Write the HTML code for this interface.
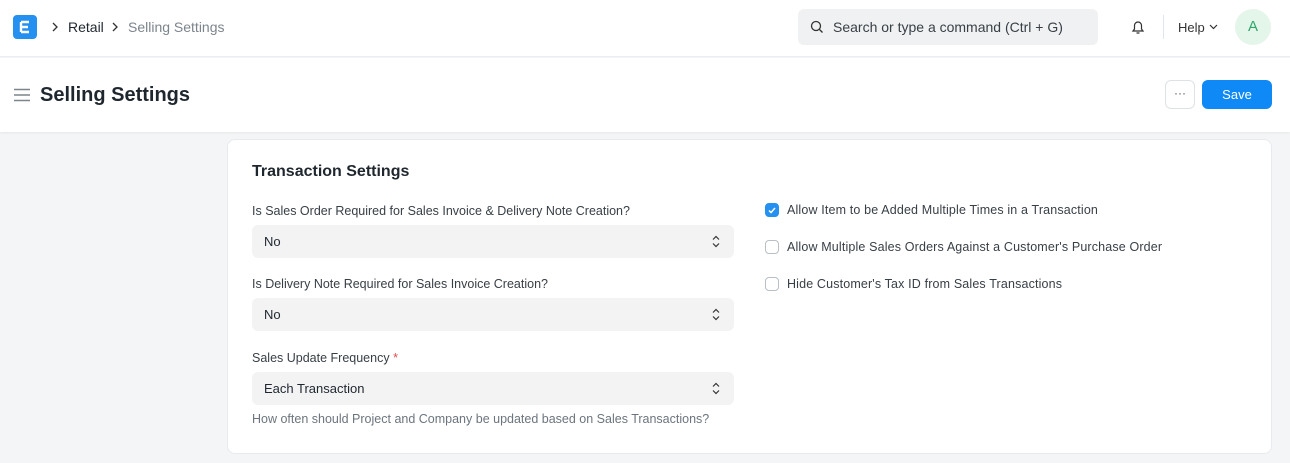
<!DOCTYPE html>
<html><head><style>
*{box-sizing:border-box;margin:0;padding:0}
body{width:1290px;height:463px;overflow:hidden;background:#f4f5f6;font-family:"Liberation Sans",sans-serif;color:#1f272e;position:relative}
.nav{position:absolute;left:0;top:0;width:1290px;height:57px;background:#fff;border-bottom:1px solid #ebeef0}
.head{position:absolute;left:0;top:58px;width:1290px;height:74px;background:#fff;box-shadow:0 1px 2px rgba(0,0,0,.06)}
.abs{position:absolute}
.card{position:absolute;left:227px;top:139px;width:1045px;height:315px;background:#fff;border-radius:8px;border:1px solid #e8ebee}
.lbl{position:absolute;font-size:12.5px;color:#383f45}
.sel{position:absolute;left:25px;width:482px;height:33px;background:#f3f3f4;border-radius:6px;font-size:13px;padding:9px 12px;color:#1f272e}
.sel svg{position:absolute;right:14px;top:10px}
.cb{position:absolute;left:538px;width:14px;height:14px;border:1px solid #b8bfc5;border-radius:4px;background:#fff}
.cbl{position:absolute;left:559px;font-size:12.5px;color:#383f45;letter-spacing:0.15px}
</style></head><body>
<div class="nav">
 <div class="abs" style="left:13px;top:15px;width:24px;height:24px;background:#2490ef;border-radius:4px">
  <svg width="24" height="24"><path d="M8 7h8M8 12h7M8 17h8M8 7v10" stroke="#fff" stroke-width="2.4" fill="none"/></svg></div>
 <svg class="abs" style="left:51px;top:22px" width="8" height="10"><path d="M2 1l4 4-4 4" stroke="#333" stroke-width="1.3" fill="none"/></svg>
 <div class="abs" style="left:68px;top:19px;font-size:14px;color:#1f272e">Retail</div>
 <svg class="abs" style="left:111px;top:22px" width="8" height="10"><path d="M2 1l4 4-4 4" stroke="#333" stroke-width="1.3" fill="none"/></svg>
 <div class="abs" style="left:128px;top:19px;font-size:14px;color:#7c858c">Selling Settings</div>
 <div class="abs" style="left:798px;top:9px;width:300px;height:36px;background:#f0f1f2;border-radius:6px"></div>
 <svg class="abs" style="left:810px;top:20px" width="14" height="14"><circle cx="6" cy="6" r="4.5" stroke="#333" stroke-width="1.3" fill="none"/><path d="M9.5 9.5l3 3" stroke="#333" stroke-width="1.3"/></svg>
 <div class="abs" style="left:833px;top:19px;font-size:14px;color:#383f45">Search or type a command (Ctrl + G)</div>
 <svg class="abs" style="left:1129px;top:18px" width="18" height="18"><path d="M4 13h10l-1.5-2V7.5a3.5 3.5 0 0 0-7 0V11z M7.5 15h3" stroke="#333" stroke-width="1.2" fill="none"/></svg>
 <div class="abs" style="left:1163px;top:15px;width:1px;height:24px;background:#e2e6e9"></div>
 <div class="abs" style="left:1178px;top:20px;font-size:13px;color:#333">Help</div>
 <svg class="abs" style="left:1209px;top:24px" width="9" height="6"><path d="M1 1l3.5 3.5L8 1" stroke="#333" stroke-width="1.2" fill="none"/></svg>
 <div class="abs" style="left:1235px;top:9px;width:36px;height:36px;border-radius:50%;background:#e4f5e9;color:#30a66d;font-size:15px;text-align:center;line-height:36px">A</div>
</div>
<div class="head">
 <svg class="abs" style="left:14px;top:30px" width="16" height="14"><path d="M0 1.5h16M0 7h16M0 12.5h16" stroke="#7c858c" stroke-width="1.4"/></svg>
 <div class="abs" style="left:40px;top:26px;font-size:20px;font-weight:bold;color:#1f272e">Selling Settings</div>
 <div class="abs" style="left:1165px;top:22px;width:30px;height:29px;border:1px solid #dfe2e5;border-radius:6px;text-align:center;font-size:12px;line-height:24px;color:#555">···</div>
 <div class="abs" style="left:1202px;top:22px;width:70px;height:29px;background:#0f89f5;border-radius:6px;color:#fff;font-size:13px;text-align:center;line-height:29px">Save</div>
</div>
<div class="card">
 <div class="abs" style="left:24px;top:23px;font-size:16px;font-weight:bold">Transaction Settings</div>
 <div class="lbl" style="left:24px;top:64px">Is Sales Order Required for Sales Invoice &amp; Delivery Note Creation?</div>
 <div class="sel" style="top:85px;left:24px">No<svg width="8" height="13"><path d="M1 4.5l3-3 3 3M1 8.5l3 3 3-3" stroke="#333" stroke-width="1.2" fill="none"/></svg></div>
 <div class="lbl" style="left:24px;top:137px">Is Delivery Note Required for Sales Invoice Creation?</div>
 <div class="sel" style="top:158px;left:24px">No<svg width="8" height="13"><path d="M1 4.5l3-3 3 3M1 8.5l3 3 3-3" stroke="#333" stroke-width="1.2" fill="none"/></svg></div>
 <div class="lbl" style="left:24px;top:211px">Sales Update Frequency <span style="color:#e24c4c">*</span></div>
 <div class="sel" style="top:232px;left:24px">Each Transaction<svg width="8" height="13"><path d="M1 4.5l3-3 3 3M1 8.5l3 3 3-3" stroke="#333" stroke-width="1.2" fill="none"/></svg></div>
 <div class="lbl" style="left:24px;top:272px;color:#6c757d">How often should Project and Company be updated based on Sales Transactions?</div>
 <div class="cb" style="top:63px;left:537px;background:#2490ef;border-color:#2490ef"><svg width="12" height="12" style="position:absolute;left:0;top:0"><path d="M3 6.5l2 2 4-4.5" stroke="#fff" stroke-width="1.5" fill="none"/></svg></div>
 <div class="cbl" style="top:63px">Allow Item to be Added Multiple Times in a Transaction</div>
 <div class="cb" style="top:100px;left:537px"></div>
 <div class="cbl" style="top:100px">Allow Multiple Sales Orders Against a Customer's Purchase Order</div>
 <div class="cb" style="top:137px;left:537px"></div>
 <div class="cbl" style="top:137px">Hide Customer's Tax ID from Sales Transactions</div>
</div>
</body></html>
